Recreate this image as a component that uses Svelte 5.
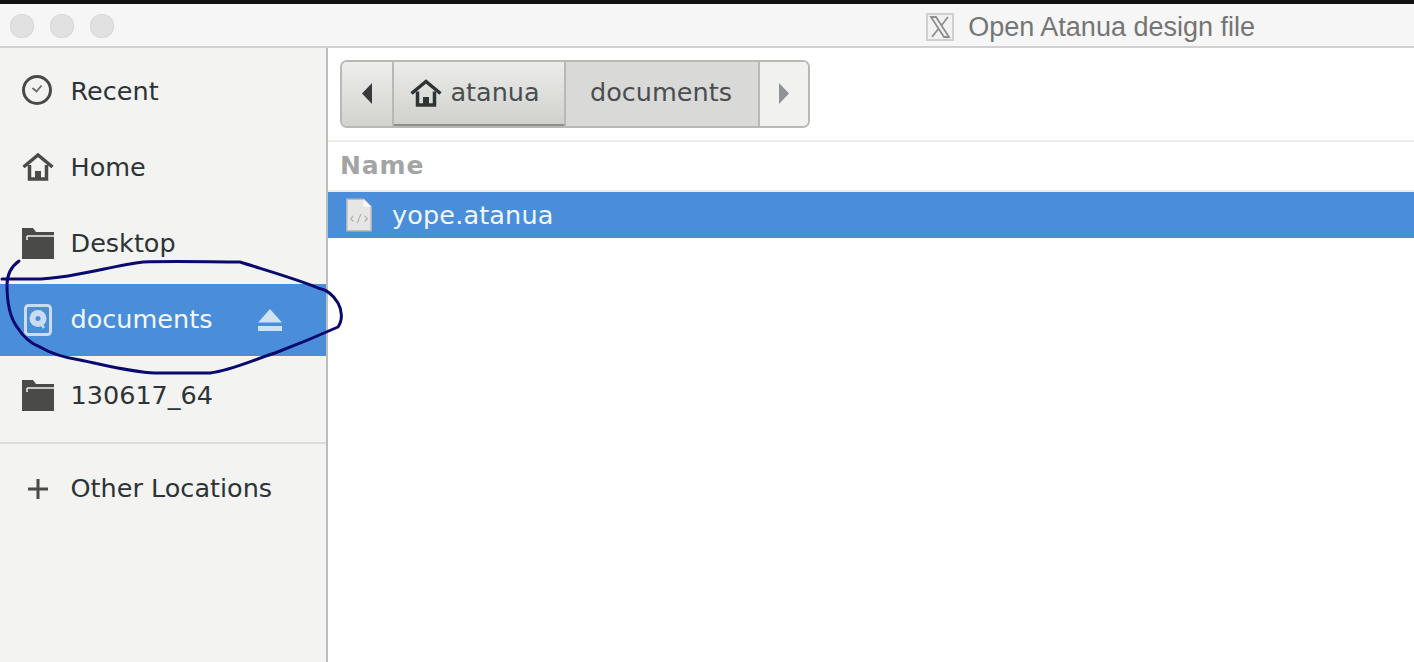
<script>
  const places = [
    { label: "Recent", icon: "clock" },
    { label: "Home", icon: "home" },
    { label: "Desktop", icon: "folder" },
    { label: "documents", icon: "disk", active: true },
    { label: "130617_64", icon: "folder" }
  ];
</script>

<div class="window">
  <div class="topstrip"></div>
  <header class="titlebar">
    <div class="lights"><span></span><span></span><span></span></div>
    <div class="title">
      <svg class="x-icon" width="28" height="28" viewBox="0 0 28 28">
        <rect x="1" y="1" width="26" height="26" fill="#f2f2f2" stroke="#cfcfcf" stroke-width="2" />
        <path d="M5 4h5l13 20h-5zM22 4l-7 9M6 24l7-9" fill="none" stroke="#8e8e8e" stroke-width="1.8" />
      </svg>
      <span>Open Atanua design file</span>
    </div>
  </header>
  <div class="body">
    <aside class="sidebar">
      <ul class="places">
        {#each places as p}
          <li class="place" class:active={p.active}>
            <span class="icon">
              {#if p.icon === "clock"}
                <svg width="32" height="32" viewBox="0 0 32 32"><circle cx="15" cy="15" r="13.500" fill="none" stroke="#4a4a48" stroke-width="3" /><path d="M10.500 13l4 3.500 5-6" fill="none" stroke="#6a6a68" stroke-width="1.800" /></svg>
              {:else if p.icon === "home"}
                <svg width="32" height="32" viewBox="0 0 32 32"><path d="M1.500 16L16 4l14.500 12" fill="none" stroke="#4a4a48" stroke-width="3.500" /><path d="M7.500 14v14h17V14" fill="none" stroke="#4a4a48" stroke-width="3.500" /><rect x="13" y="20" width="6" height="8" fill="#4a4a48" /></svg>
              {:else if p.icon === "folder"}
                <svg width="32" height="32" viewBox="0 0 32 32"><path d="M0 1h11l3 4h18v27H0z" fill="#4a4a48" /><path d="M5 9h27" stroke="#f3f3f2" stroke-width="1.500" /><path d="M5 9v4" stroke="#f3f3f2" stroke-width="1.500" /></svg>
              {:else}
                <svg width="32" height="32" viewBox="0 0 32 32"><rect x="3.500" y="1.500" width="25" height="29" rx="3" fill="none" stroke="#c9dcf3" stroke-width="3" /><rect x="6" y="4" width="20" height="24" fill="#4a8dd8" /><circle cx="16" cy="14.500" r="8.500" fill="#c9dcf3" /><circle cx="16" cy="14.500" r="2.500" fill="#4a8dd8" /><path d="M17 17l5 7" stroke="#c9dcf3" stroke-width="2.500" /></svg>
              {/if}
            </span>
            <span class="label">{p.label}</span>
            {#if p.active}
              <svg class="eject" width="26" height="22" viewBox="0 0 26 22"><path d="M13 0L25 13.500H1z M1 17h24v5H1z" fill="#d2e2f5" /></svg>
            {/if}
          </li>
        {/each}
      </ul>
      <hr class="divider" />
      <div class="place other">
        <span class="icon">
          <svg width="32" height="32" viewBox="0 0 32 32"><path d="M16 6v20M6 16h20" stroke="#4a4a48" stroke-width="3" /></svg>
        </span>
        <span class="label">Other Locations</span>
      </div>
    </aside>
    <main class="content">
      <div class="toolbar">
        <div class="pathbar">
          <button class="arrow back"><svg width="12" height="22" viewBox="0 0 12 22"><path d="M11 0v21L1 10.500z" fill="#3a3a3a" /></svg></button>
          <button class="crumb current">
            <svg width="32" height="28" viewBox="0 0 32 28"><path d="M1.500 14.500L16 2.500l14.500 12" fill="none" stroke="#2e3436" stroke-width="3.500" /><path d="M7.500 12.500V26h17V12.500" fill="none" stroke="#2e3436" stroke-width="3.500" /><rect x="13" y="18" width="6" height="8" fill="#2e3436" /></svg>
            atanua
          </button>
          <button class="crumb plain">documents</button>
          <button class="arrow forward"><svg width="12" height="22" viewBox="0 0 12 22"><path d="M1 0v21l10-10.500z" fill="#8f9396" /></svg></button>
        </div>
      </div>
      <div class="colhead">Name</div>
      <div class="filerow">
        <svg class="file" width="28" height="36" viewBox="0 0 28 36">
          <path d="M1 1h18l8 8v26H1z" fill="#e6e6e4" stroke="#bdbdbb" stroke-width="1.500" />
          <path d="M19 1v8h8" fill="#fbfbfb" />
          <path d="M8 19l-3 3 3 3M20 19l3 3-3 3M16 17l-4 10" fill="none" stroke="#b0b0ae" stroke-width="1.300" />
        </svg>
        <span>yope.atanua</span>
      </div>
    </main>
  </div>
  <svg class="annotation" width="1414" height="662" viewBox="0 0 1414 662" aria-hidden="true">
    <path d="M19 261C12 266 7 274 7 285C7 300 9 316 17 327C24 338 32 344 40 347C50 353 60 357 80 360C105 365 130 372 155 373L210 373C232 370 250 361 275 353C296 345 320 335 338 327C343 320 342 310 338 303C334 296 328 290 318 288C300 280 265 270 240 262C210 262 175 261 143 262C110 266 70 279 33 279L2 279" fill="none" stroke="#0a0a6e" stroke-width="3" stroke-linecap="round" stroke-linejoin="round" />
  </svg>
</div>

<style>
  :global(body) { margin: 0; background: #fff; }
  .window {
    position: relative;
    width: 1414px;
    height: 662px;
    display: flex;
    flex-direction: column;
    overflow: hidden;
    font-family: "DejaVu Sans", sans-serif;
    font-size: 25.5px;
    color: #2e3436;
  }
  .topstrip { height: 4px; background: #111; flex: none; }
  .titlebar {
    height: 44px;
    box-sizing: border-box;
    flex: none;
    background: #f6f6f6;
    border-bottom: 2px solid #d0d0d0;
    display: flex;
    align-items: center;
    padding-top: 2px;
  }
  .lights { display: flex; gap: 16px; margin-left: 10px; }
  .lights span {
    width: 24px;
    height: 24px;
    border-radius: 50%;
    background: #e1e1e1;
    box-shadow: inset 0 0 0 1px #d8d8d8;
  }
  .title {
    margin: 2px 159px 0 auto;
    display: flex;
    align-items: center;
    gap: 14px;
    font-family: "Liberation Sans", Arial, sans-serif;
    font-size: 27px;
    color: #757575;
  }
  .x-icon { flex: none; }
  .body { flex: 1; display: flex; min-height: 0; }
  .sidebar {
    width: 326px;
    flex: none;
    background: #f3f3f2;
    border-right: 2px solid #bdbdbb;
    padding-top: 5px;
  }
  .places { list-style: none; margin: 0; padding: 0; }
  .place {
    height: 76px;
    display: flex;
    align-items: center;
    padding-left: 22px;
    box-sizing: border-box;
  }
  .place.active { background: #4a8dd8; color: #f2f7fd; height: 72px; margin: 3px 0 1px; }
  .icon { width: 32px; height: 32px; display: flex; flex: none; margin-right: 17px; }
  .label { white-space: nowrap; margin-left: -0.5px; margin-top: -1px; }
  .active .label { margin-top: -3px; }
  .active .icon { margin-top: -1px; }
  .eject { margin-left: 45px; margin-top: -1px; }
  .divider { border: 0; border-top: 2px solid #dcdcda; margin: 9px 0 0; }
  .other { height: 89px; }
  .content { flex: 1; min-width: 0; background: #fff; }
  .toolbar {
    height: 94px;
    box-sizing: border-box;
    padding: 12px 0 0 12px;
    border-bottom: 2px solid #ececea;
  }
  .pathbar {
    display: inline-flex;
    height: 68px;
    box-sizing: border-box;
    border: 2px solid #b8b8b4;
    border-radius: 7px;
    overflow: hidden;
  }
  button {
    font: inherit;
    color: inherit;
    border: 0;
    padding: 0;
    display: flex;
    align-items: center;
    justify-content: center;
    height: 100%;
    box-sizing: border-box;
  }
  .arrow { width: 52px; }
  .back {
    background: linear-gradient(#eeeeec, #d2d2ce);
    border-right: 2px solid #b8b8b4;
  }
  .forward {
    width: 50px;
    background: #f1f1f0;
    border-left: 2px solid #b8b8b4;
  }
  .crumb { white-space: nowrap; line-height: 1; padding-bottom: 2px; }
  .current {
    width: 170px;
    gap: 8px;
    color: #4a4e50;
    background: linear-gradient(#ececea, #cfcfcb);
    box-shadow: inset 0 -2px 0 #8f8f8a;
    padding-right: 8px;
  }
  .plain {
    width: 194px;
    background: #d9d9d7;
    border-left: 2px solid #b8b8b4;
    color: #4a4e50;
    padding-right: 2px;
  }
  .colhead {
    height: 50px;
    display: flex;
    align-items: center;
    padding: 0 0 2px 12px;
    font-weight: 700;
    font-size: 25px;
    letter-spacing: 0.9px;
    color: #a3a5a5;
    box-sizing: border-box;
    border-bottom: 2px solid #ececea;
  }
  .filerow {
    height: 46px;
    background: #4a8dd8;
    color: #f2f7fd;
    display: flex;
    align-items: center;
    padding-left: 18px;
    gap: 20px;
    letter-spacing: 0.15px;
  }
  .file { flex: none; width: 26px; height: 34px; }
  .annotation { position: absolute; left: 0; top: 0; pointer-events: none; }
</style>
